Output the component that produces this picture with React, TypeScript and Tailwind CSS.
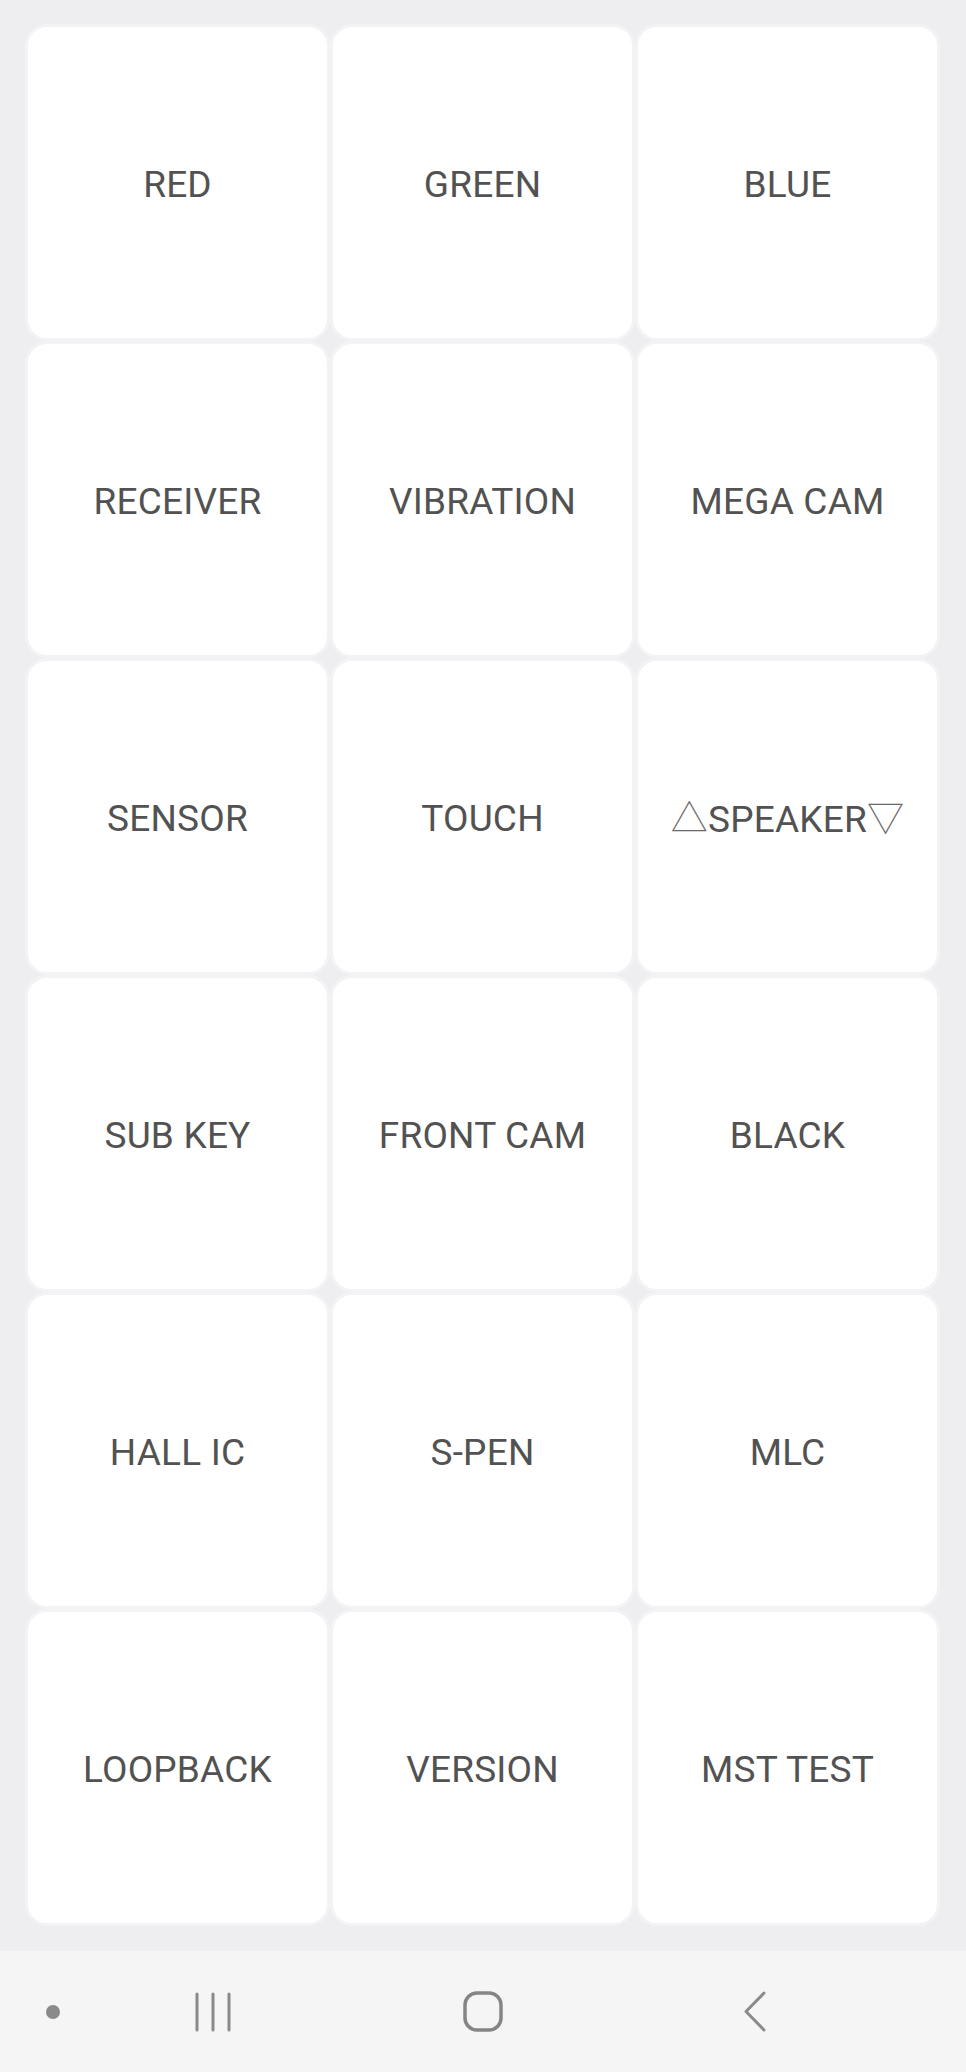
import React from "react";

const tests = [
  "RED",
  "GREEN",
  "BLUE",
  "RECEIVER",
  "VIBRATION",
  "MEGA CAM",
  "SENSOR",
  "TOUCH",
  "△SPEAKER▽",
  "SUB KEY",
  "FRONT CAM",
  "BLACK",
  "HALL IC",
  "S-PEN",
  "MLC",
  "LOOPBACK",
  "VERSION",
  "MST TEST",
];

// triangles come from a thinner fallback font on the device
function Label({ text }: { text: string }) {
  const parts = text.split(/([△▽])/).filter(Boolean);
  return (
    <span className="leading-none">
      {parts.map((p, i) =>
        p === "△" || p === "▽" ? (
          <span key={i} className="font-['Noto_Sans_CJK_SC',sans-serif] text-[#6a6a6a] font-light">
            {p}
          </span>
        ) : (
          <span key={i}>{p}</span>
        )
      )}
    </span>
  );
}

function NavBar() {
  return (
    <div className="h-[121px] bg-[#f5f5f5] flex items-center">
      <div className="ml-[46px] w-[14px] h-[14px] rounded-full bg-[#8a8a8a]" />
      <svg className="ml-[135px]" width="36" height="40" viewBox="0 0 36 40">
        <g stroke="#8a8a8a" strokeWidth="3" strokeLinecap="round">
          <line x1="2" y1="2" x2="2" y2="38" />
          <line x1="18" y1="2" x2="18" y2="38" />
          <line x1="34" y1="2" x2="34" y2="38" />
        </g>
      </svg>
      <svg className="ml-[232px]" width="40" height="41" viewBox="0 0 40 41">
        <rect x="2" y="2" width="36" height="37" rx="12" fill="none" stroke="#858585" strokeWidth="3.5" />
      </svg>
      <svg className="ml-[241px]" width="22" height="41" viewBox="0 0 22 41">
        <polyline points="20,2 2,20.5 20,39" fill="none" stroke="#8a8a8a" strokeWidth="3" strokeLinecap="round" strokeLinejoin="round" />
      </svg>
    </div>
  );
}

export default function App() {
  return (
    <div className="w-[966px] h-[2072px] bg-[#eeeef0] flex flex-col font-['Roboto',sans-serif]">
      <div className="pl-[25px] pr-[26px] pt-[24px] grid grid-cols-3">
        {tests.map((t) => (
          <div
            key={t}
            className="h-[317px] bg-white rounded-[22px] border-[3px] border-[#f3f3f5] flex items-center justify-center pt-[3px] text-[37px] text-[#525252] tracking-[0.2px]"
          >
            <Label text={t} />
          </div>
        ))}
      </div>
      <div className="flex-1" />
      <NavBar />
    </div>
  );
}
